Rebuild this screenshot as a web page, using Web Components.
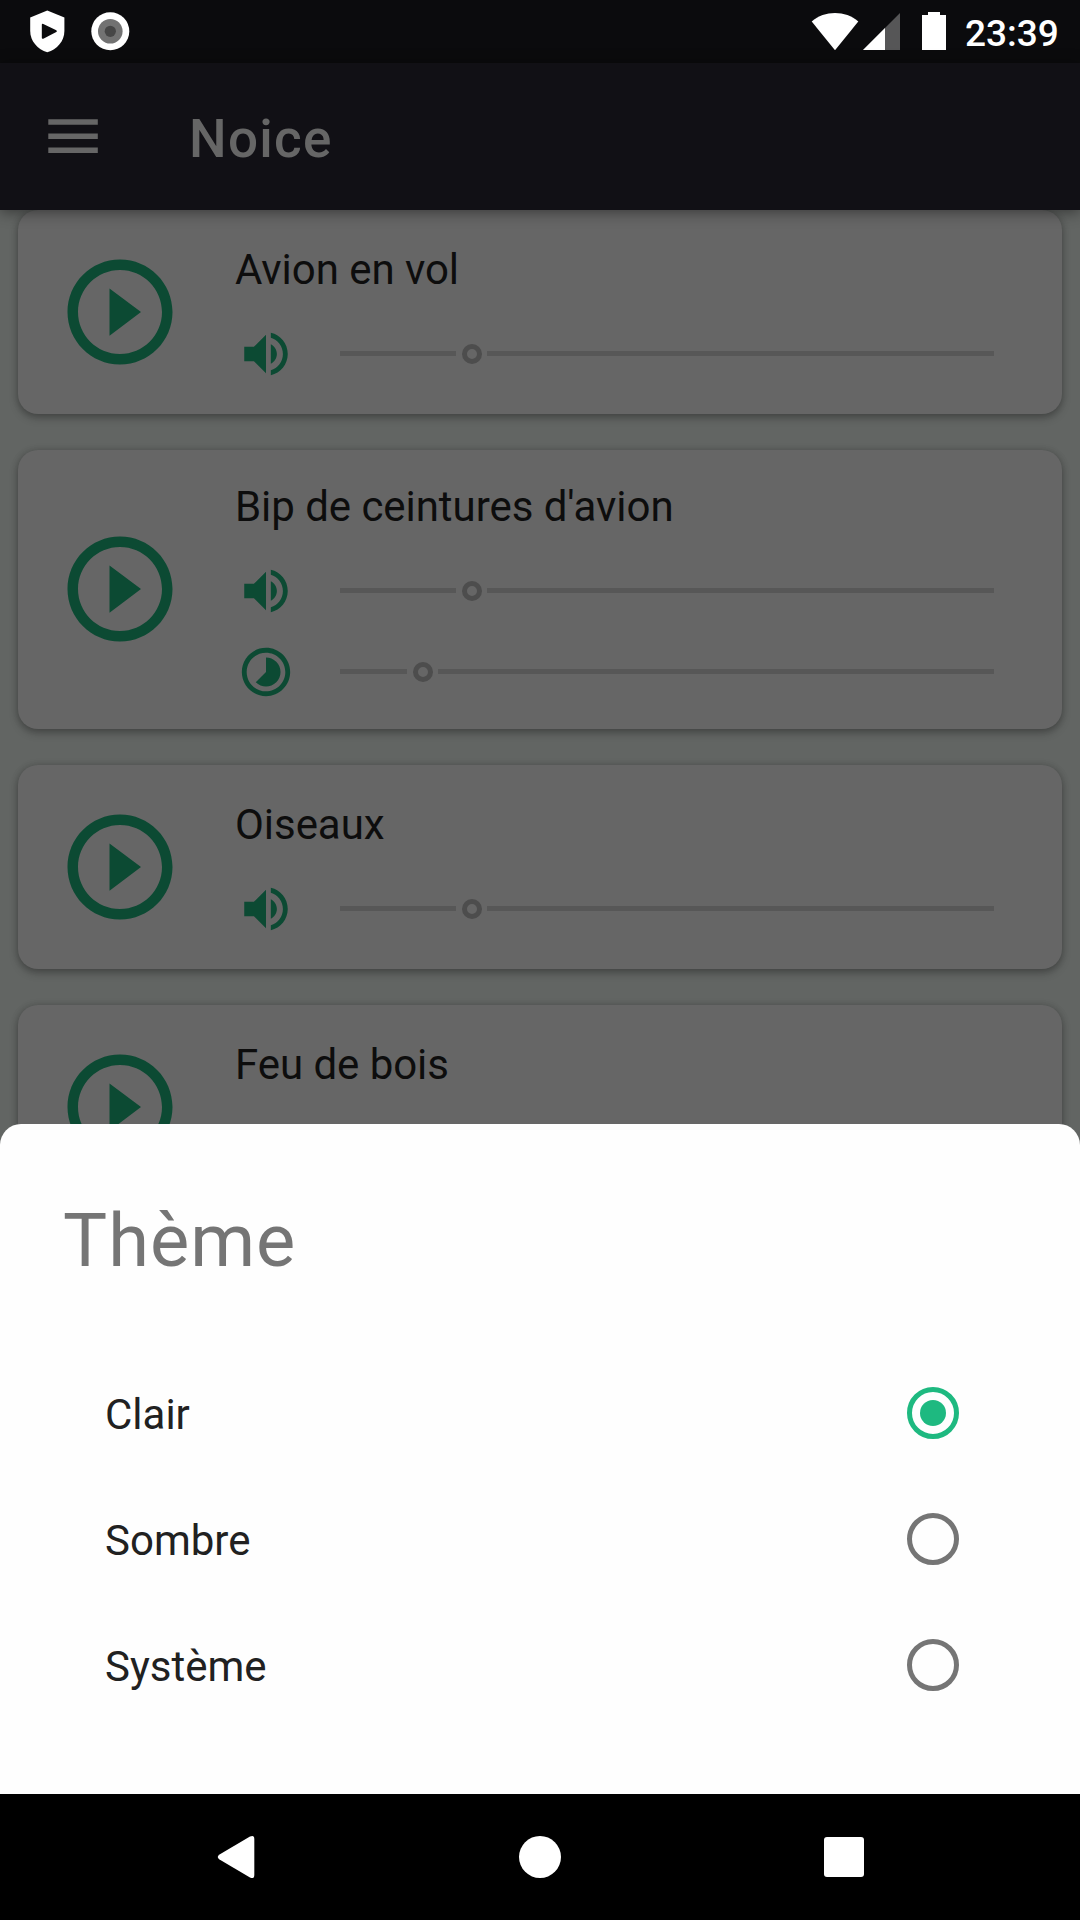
<!DOCTYPE html>
<html lang="fr">
<head>
<meta charset="utf-8">
<title>Noice</title>
<style>
html,body{margin:0;padding:0;background:#000}
body{width:1080px;height:1920px;overflow:hidden;font-family:Roboto,"Noto Sans",sans-serif}
</style>
</head>
<body>
<noice-screen></noice-screen>
<script>
const define=(name,html,setup)=>{
  const t=document.createElement('template');t.innerHTML=html;
  customElements.define(name,class extends HTMLElement{
    constructor(){super();this.attachShadow({mode:'open'}).append(t.content.cloneNode(true));}
    connectedCallback(){if(setup)setup(this,this.shadowRoot);}
  });
};

define('status-bar',`<style>
:host{display:flex;height:63px;flex:none;background:#0b0b0d;justify-content:space-between;color:#fff}
svg{display:block;flex:none}
div{display:flex}
span{font-size:37px;font-weight:500;line-height:63px;width:115px;padding-top:2px;box-sizing:border-box;white-space:nowrap}
</style>
<div><svg width="140" height="63" viewBox="0 0 140 63">
<path fill="#fff" d="M47.3 10.5L64.4 17.6V31C64.4 41 57 49.5 47.3 52.2C37.600 49.500 30.200 41 30.200 31V17.600Z"/>
<path fill="#0b0b0d" d="M41.800 24.700q0-1.500 1.500-.800l13 6.300q1.300.9 0 1.800l-13 6.700q-1.500.6-1.500-.9z"/>
<circle cx="110.300" cy="31.300" r="19" fill="#fff"/><circle cx="110.300" cy="31.300" r="12.300" fill="#727272"/><circle cx="110.300" cy="31.300" r="5.600" fill="#464646"/>
</svg></div>
<div><svg width="160" height="63" viewBox="805 0 160 63">
<path fill="#fff" d="M835 50.200L811.700 21.500C824.500 10.300 845.500 10.300 858.300 21.500Z"/>
<path fill="#565657" d="M900 13V50H863Z"/><path fill="#fff" d="M885 28V50H863Z"/>
<path fill="#fff" d="M922 15H928V12H940V15H946V50H922Z"/>
</svg><span>23:39</span></div>`);

define('app-bar',`<style>
:host{display:flex;height:147px;flex:none;background:#111015;align-items:center;box-shadow:0 2px 14px rgba(0,0,0,.45);position:relative;z-index:1}
svg{display:block;margin-left:42px}
h1{margin:4px 0 0 84px;font-size:53px;line-height:62px;font-weight:500;color:#666;letter-spacing:1.300px}
</style>
<svg width="63" height="63" viewBox="0 0 63 63" fill="#666"><path d="M6.300 14.200h49.500v5.500H6.300zM6.300 28.400h49.500v5.500H6.300zM6.300 42.400h49.500v5.500H6.300z"/></svg>
<h1><slot></slot></h1>`);

define('value-slider',`<style>
:host{display:flex;align-items:center;height:58px;width:654px}
i{display:block;height:5px;background:#575757;flex:1}
i.a{flex:none}
b{display:block;box-sizing:border-box;width:20px;height:20px;border:5px solid #4d4d4d;border-radius:50%;margin:0 5.500px}
</style><i class="a"></i><b></b><i></i>`,(h,r)=>{r.querySelector('.a').style.width=h.getAttribute('before')+'px';});

define('sound-control',`<style>
:host{display:flex;align-items:center;height:58px;gap:45px}
svg{display:block;fill:#0c4a33}
</style><svg width="58" height="58" viewBox="0 0 24 24"><path/></svg><value-slider></value-slider>`,(h,r)=>{
  const icons={
    volume:'M3 9v6h4l5 5V4L7 9H3zm13.500 3c0-1.770-1.020-3.290-2.500-4.030v8.050c1.480-.73 2.500-2.250 2.500-4.020zM14 3.230v2.060c2.890.86 5 3.540 5 6.710s-2.110 5.850-5 6.710v2.060c4.010-.91 7-4.490 7-8.770s-2.990-7.860-7-8.770z',
    period:'M16.240 7.760C15.070 6.590 13.540 6 12 6v6l-4.240 4.240c2.340 2.340 6.140 2.340 8.490 0 2.340-2.340 2.340-6.140-.01-8.480zM12 2C6.480 2 2 6.480 2 12s4.480 10 10 10 10-4.480 10-10S17.520 2 12 2zm0 18c-4.420 0-8-3.580-8-8s3.580-8 8-8 8 3.580 8 8-3.580 8-8 8z'};
  r.querySelector('path').setAttribute('d',icons[h.getAttribute('icon')]);
  const s=r.querySelector('value-slider'),w=h.getAttribute('before');
  s.setAttribute('before',w);
  if(s.shadowRoot)s.shadowRoot.querySelector('.a').style.width=w+'px';
});

define('sound-card',`<style>
:host{display:flex;box-sizing:border-box;flex:none;height:204px;border-radius:20px;background:#666;align-items:center;padding-left:39px;box-shadow:0 4px 9px rgba(0,0,0,.26),0 0 7px rgba(0,0,0,.16)}
:host([tall]){height:279px}
svg{display:block;flex:none;fill:#0c4a33}
:host([tall]) svg{margin-bottom:2px}
.c{align-self:stretch;margin-left:52px;padding-top:35px;display:flex;flex-direction:column}
:host([tall]) .c{padding-top:32px}
h2{margin:0;font-size:42px;line-height:50px;font-weight:400;color:#0d0d0d;white-space:nowrap;letter-spacing:-.05px}
.k{display:flex;flex-direction:column;gap:23px;padding-top:29.500px;margin-left:2px}
</style>
<svg width="126" height="126" viewBox="0 0 24 24"><path d="M10 16.500l6-4.500-6-4.500v9zM12 2C6.480 2 2 6.480 2 12s4.480 10 10 10 10-4.480 10-10S17.520 2 12 2zm0 18c-4.410 0-8-3.590-8-8s3.590-8 8-8 8 3.590 8 8-3.590 8-8 8z"/></svg>
<div class="c"><h2><slot name="title"></slot></h2><div class="k"><slot></slot></div></div>`);

define('theme-option',`<style>
:host{display:flex;height:126px;align-items:center;justify-content:space-between;padding:0 121px 0 105px;color:#212121;font-size:42px}
span{padding-top:3px}
i{box-sizing:border-box;display:grid;place-items:center;width:52px;height:52px;border:5px solid #757575;border-radius:50%}
:host([checked]) i{border-color:#1eb980}
:host([checked]) i::after{content:"";width:26px;height:26px;border-radius:50%;background:#1eb980}
</style><span><slot></slot></span><i></i>`);

define('bottom-sheet',`<style>
:host{display:flex;flex-direction:column;box-sizing:border-box;height:670px;background:#fefefe;border-radius:21px 21px 0 0}
h1{margin:74px 0 0 63px;font-size:74px;line-height:86px;font-weight:400;color:#757575;letter-spacing:1px}
div{margin-top:66px}
</style><h1><slot name="title"></slot></h1><div><slot></slot></div>`);

define('nav-bar',`<style>
:host{display:flex;height:126px;flex:none;background:#000;align-items:center;justify-content:space-between;padding:0 217px}
svg{display:block;overflow:visible}
</style>
<svg width="42" height="42" viewBox="0 0 42 42" fill="#fff"><path d="M33 .5Q37.300-1.500 37.300 3V39Q37.300 43.500 33 41.500L2.500 23.500Q-1 21 2.500 18.500Z"/></svg>
<svg width="42" height="42" viewBox="0 0 42 42" fill="#fff"><circle cx="21" cy="21" r="21"/></svg>
<svg width="42" height="42" viewBox="0 0 42 42" fill="#fff"><rect x="3" y="1" width="40" height="40" rx="3"/></svg>`);

define('noice-screen',`<style>
:host{display:flex;flex-direction:column;width:1080px;height:1920px;overflow:hidden}
main{display:grid;height:1584px;flex:none;grid-template-rows:914px 670px}
.list{grid-area:1/1/3/2;background:#626563;padding:0 18px;display:flex;flex-direction:column;gap:36px;overflow:hidden}
bottom-sheet{grid-area:2/1}
</style>
<status-bar></status-bar><app-bar>Noice</app-bar>
<main><div class="list">
<sound-card><span slot="title">Avion en vol</span><sound-control icon="volume" before="116"></sound-control></sound-card>
<sound-card tall><span slot="title">Bip de ceintures d'avion</span><sound-control icon="volume" before="116"></sound-control><sound-control icon="period" before="67"></sound-control></sound-card>
<sound-card><span slot="title">Oiseaux</span><sound-control icon="volume" before="116"></sound-control></sound-card>
<sound-card><span slot="title">Feu de bois</span></sound-card>
</div>
<bottom-sheet><span slot="title">Thème</span><theme-option checked>Clair</theme-option><theme-option>Sombre</theme-option><theme-option>Système</theme-option></bottom-sheet>
</main><nav-bar></nav-bar>`);
</script>
</body>
</html>
